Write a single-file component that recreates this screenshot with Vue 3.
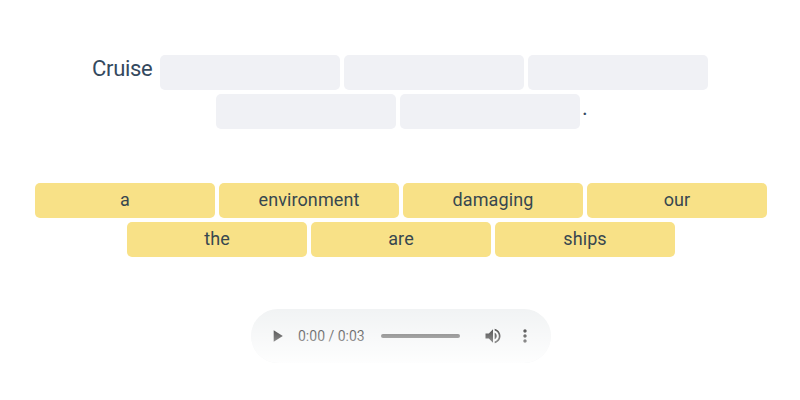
<template>
  <div class="exercise">
    <div class="sentence">
      <div class="row">
        <span class="word">Cruise</span>
        <span v-for="n in 3" :key="n" class="slot"></span>
      </div>
      <div class="row">
        <span v-for="n in 2" :key="n" class="slot"></span>
        <span class="stop">.</span>
      </div>
    </div>

    <div class="bank">
      <div v-for="(row, i) in words" :key="i" class="row">
        <button v-for="word in row" :key="word" class="tile">{{ word }}</button>
      </div>
    </div>

    <div class="player">
      <svg class="play" width="20" height="20" viewBox="0 0 24 24">
        <path d="M8 5v14l11-7z" />
      </svg>
      <span class="time">0:00 / 0:03</span>
      <span class="track"></span>
      <svg class="volume" width="20" height="20" viewBox="0 0 24 24">
        <path d="M3 9v6h4l5 5V4L7 9H3zm13.5 3c0-1.77-1.02-3.29-2.5-4.03v8.05c1.48-.73 2.5-2.25 2.5-4.02zM14 3.23v2.06c2.89.86 5 3.54 5 6.71s-2.11 5.85-5 6.71v2.06c4.01-.91 7-4.49 7-8.77s-2.99-7.86-7-8.77z" />
      </svg>
      <svg class="more" width="20" height="20" viewBox="0 0 24 24">
        <path d="M12 8c1.1 0 2-.9 2-2s-.9-2-2-2-2 .9-2 2 .9 2 2 2zm0 2c-1.1 0-2 .9-2 2s.9 2 2 2 2-.9 2-2-.9-2-2-2zm0 6c-1.1 0-2 .9-2 2s.9 2 2 2 2-.9 2-2-.9-2-2-2z" />
      </svg>
    </div>
  </div>
</template>

<script setup>
const words = [
  ['a', 'environment', 'damaging', 'our'],
  ['the', 'are', 'ships']
]
</script>

<style scoped>
.exercise {
  display: flex;
  flex-direction: column;
  align-items: center;
  box-sizing: border-box;
  width: 800px;
  height: 400px;
  padding-top: 55px;
  background: #fff;
  color: #34495e;
  font-family: Roboto, sans-serif;
}

.sentence,
.bank {
  display: flex;
  flex-direction: column;
  gap: 4px;
}

.row {
  display: flex;
  justify-content: center;
  gap: 4px;
  height: 35px;
}

.word,
.stop {
  font-size: 22px;
  line-height: 27px;
  letter-spacing: -0.3px;
}

.word {
  width: 61px;
  margin-right: 3px;
}

.stop {
  width: 6px;
  margin-left: -2px;
}

.row:last-child .slot:first-child {
  margin-left: 4px;
}

.slot,
.tile {
  box-sizing: border-box;
  flex: none;
  width: 180px;
  height: 35px;
  border-radius: 5px;
}

.slot {
  background: #f0f1f5;
}

.bank {
  margin: 54px 0 0 2px;
}

.tile {
  border: 0;
  padding: 0 0 2px;
  background: #f8e187;
  color: #37474f;
  font-family: inherit;
  font-size: 18px;
  line-height: 33px;
  letter-spacing: 0.1px;
  text-align: center;
  cursor: pointer;
}

.player {
  position: relative;
  display: flex;
  align-items: center;
  box-sizing: border-box;
  width: 300px;
  height: 54px;
  margin: 52px 0 0 2px;
  padding: 0 16px;
  border-radius: 27px;
  background: #f1f3f4;
  overflow: hidden;
}

/* fades the controls out towards the bottom edge */
.player::after {
  content: '';
  position: absolute;
  inset: 0;
  background: linear-gradient(rgba(255, 255, 255, 0), rgba(255, 255, 255, 0.9));
}

.time {
  width: 67px;
  margin-left: 11px;
  color: #111;
  font-size: 14px;
  line-height: 20px;
  white-space: nowrap;
}

.track {
  width: 79.5px;
  height: 4px;
  margin-left: 15.5px;
  border-radius: 2px;
  background: #505050;
}

.volume {
  margin-left: 23px;
}

.more {
  margin-left: 12px;
}
</style>
